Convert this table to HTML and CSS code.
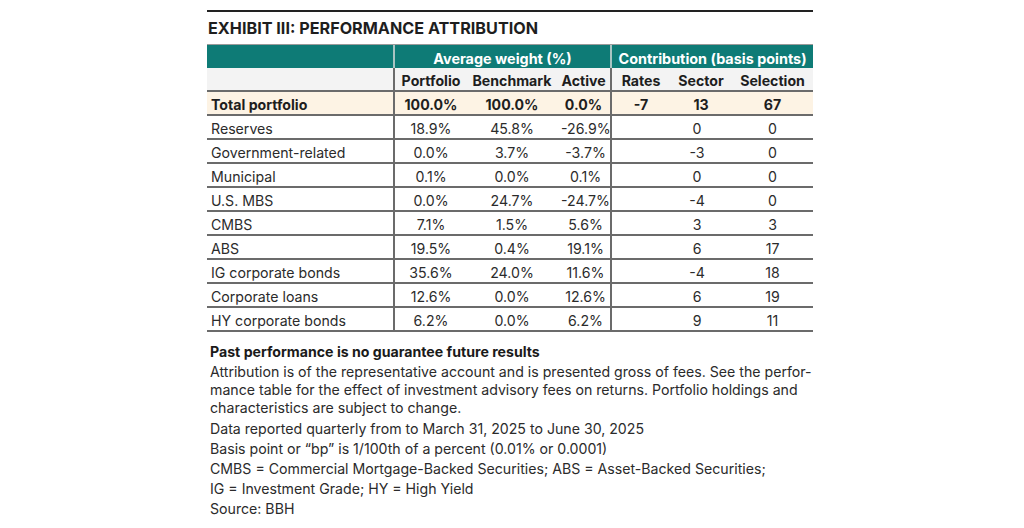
FILE: index.html
```html
<!DOCTYPE html>
<html lang="en">
<head>
<meta charset="utf-8">
<title>Exhibit III: Performance Attribution</title>
<link rel="stylesheet" href="styles.css">
</head>
<body>
<div class="exhibit">
  <h1 class="title">EXHIBIT III: PERFORMANCE ATTRIBUTION</h1>
  <table class="attr">
    <colgroup>
      <col class="c-label"><col class="c-port"><col class="c-bench"><col class="c-act"><col class="c-rates"><col class="c-sector"><col class="c-sel">
    </colgroup>
    <thead>
      <tr class="group">
        <th class="lbl"></th>
        <th colspan="3" class="sep">Average weight (%)</th>
        <th colspan="3">Contribution (basis points)</th>
      </tr>
      <tr class="sub">
        <th class="lbl"></th>
        <th>Portfolio</th>
        <th>Benchmark</th>
        <th class="sep">Active</th>
        <th>Rates</th>
        <th>Sector</th>
        <th>Selection</th>
      </tr>
    </thead>
    <tbody>
      <tr class="total">
        <td class="lbl">Total portfolio</td>
        <td>100.0%</td><td>100.0%</td><td class="sep act">0.0%</td><td>-7</td><td>13</td><td>67</td>
      </tr>
      <tr><td class="lbl">Reserves</td><td>18.9%</td><td>45.8%</td><td class="sep act">-26.9%</td><td></td><td class="sec">0</td><td>0</td></tr>
      <tr><td class="lbl">Government-related</td><td>0.0%</td><td>3.7%</td><td class="sep act">-3.7%</td><td></td><td class="sec">-3</td><td>0</td></tr>
      <tr><td class="lbl">Municipal</td><td>0.1%</td><td>0.0%</td><td class="sep act">0.1%</td><td></td><td class="sec">0</td><td>0</td></tr>
      <tr><td class="lbl">U.S. MBS</td><td>0.0%</td><td>24.7%</td><td class="sep act">-24.7%</td><td></td><td class="sec">-4</td><td>0</td></tr>
      <tr><td class="lbl">CMBS</td><td>7.1%</td><td>1.5%</td><td class="sep act">5.6%</td><td></td><td class="sec">3</td><td>3</td></tr>
      <tr><td class="lbl">ABS</td><td>19.5%</td><td>0.4%</td><td class="sep act">19.1%</td><td></td><td class="sec">6</td><td>17</td></tr>
      <tr><td class="lbl">IG corporate bonds</td><td>35.6%</td><td>24.0%</td><td class="sep act">11.6%</td><td></td><td class="sec">-4</td><td>18</td></tr>
      <tr><td class="lbl">Corporate loans</td><td>12.6%</td><td>0.0%</td><td class="sep act">12.6%</td><td></td><td class="sec">6</td><td>19</td></tr>
      <tr><td class="lbl">HY corporate bonds</td><td>6.2%</td><td>0.0%</td><td class="sep act">6.2%</td><td></td><td class="sec">9</td><td>11</td></tr>
    </tbody>
  </table>
  <div class="notes">
    <p class="strong">Past performance is no guarantee future results</p>
    <p>Attribution is of the representative account and is presented gross of fees. See the perfor-mance table for the effect of investment advisory fees on returns. Portfolio holdings and characteristics are subject to change.</p>
    <p class="gap">Data reported quarterly from to March 31, 2025 to June 30, 2025</p>
    <p>Basis point or “bp” is 1/100th of a percent (0.01% or 0.0001)</p>
    <p>CMBS = Commercial Mortgage-Backed Securities; ABS = Asset-Backed Securities;</p>
    <p>IG = Investment Grade; HY = High Yield</p>
    <p>Source: BBH</p>
  </div>
</div>
</body>
</html>
```

FILE: styles.css
```css
html, body {
  margin: 0;
  padding: 0;
  background: #ffffff;
}
body {
  font-family: Inter, "Noto Sans", "Liberation Sans", sans-serif;
  color: #2b2b2b;
  font-size: 14.15px;
}
.exhibit {
  width: 606px;
  margin: 10px 0 0 207px;
  border-top: 2px solid #222;
}
.title {
  margin: 0;
  padding: 5px 0 0 1px;
  height: 27px;
  font-size: 16.2px;
  line-height: 22px;
  font-weight: 700;
  color: #1e1e1e;
}
.attr {
  width: 606px;
  table-layout: fixed;
  border-collapse: separate;
  border-spacing: 0;
  border-top: 1px solid #9a9a9a;
}
.c-label { width: 188px; }
.c-port { width: 72px; }
.c-bench { width: 90px; }
.c-act { width: 55px; }
.c-rates { width: 58px; }
.c-sector { width: 62px; }
.c-sel { width: 81px; }

.attr th, .attr td {
  padding: 4px 0 0;
  height: 18px;
  line-height: 18px;
  text-align: center;
  white-space: nowrap;
  border-bottom: 2px solid #6b6b6b;
}
.attr .lbl {
  text-align: left;
  padding-left: 4px;
  border-right: 2px solid #6b6b6b;
}
.attr .sep {
  border-right: 2px solid #6b6b6b;
}
.group th {
  background: #0e7b76;
  color: #ffffff;
  font-weight: 700;
  font-size: 14.4px;
  height: 19px;
  border-bottom: 0;
}
.group th.lbl, .group th.sep {
  border-right: 2px solid #a9c4c2;
}
.sub th {
  background: #f3f3f3;
  color: #1e1e1e;
  font-weight: 700;
}
.total td {
  background: #fdf3e4;
  color: #1e1e1e;
  font-weight: 700;
}
.attr tbody td.act { padding-left: 4px; }
.attr tbody td.sec { padding-right: 8px; }
.attr tbody tr.total td.act { padding-left: 0; }

.notes {
  width: 608px;
  padding: 11px 0 0 3px;
  color: #2b2b2b;
}
.notes p {
  margin: 0 0 2px;
  line-height: 18px;
}
.notes .strong {
  font-weight: 700;
  color: #1a1a1a;
}
.notes .gap {
  margin-top: 3px;
}
```
